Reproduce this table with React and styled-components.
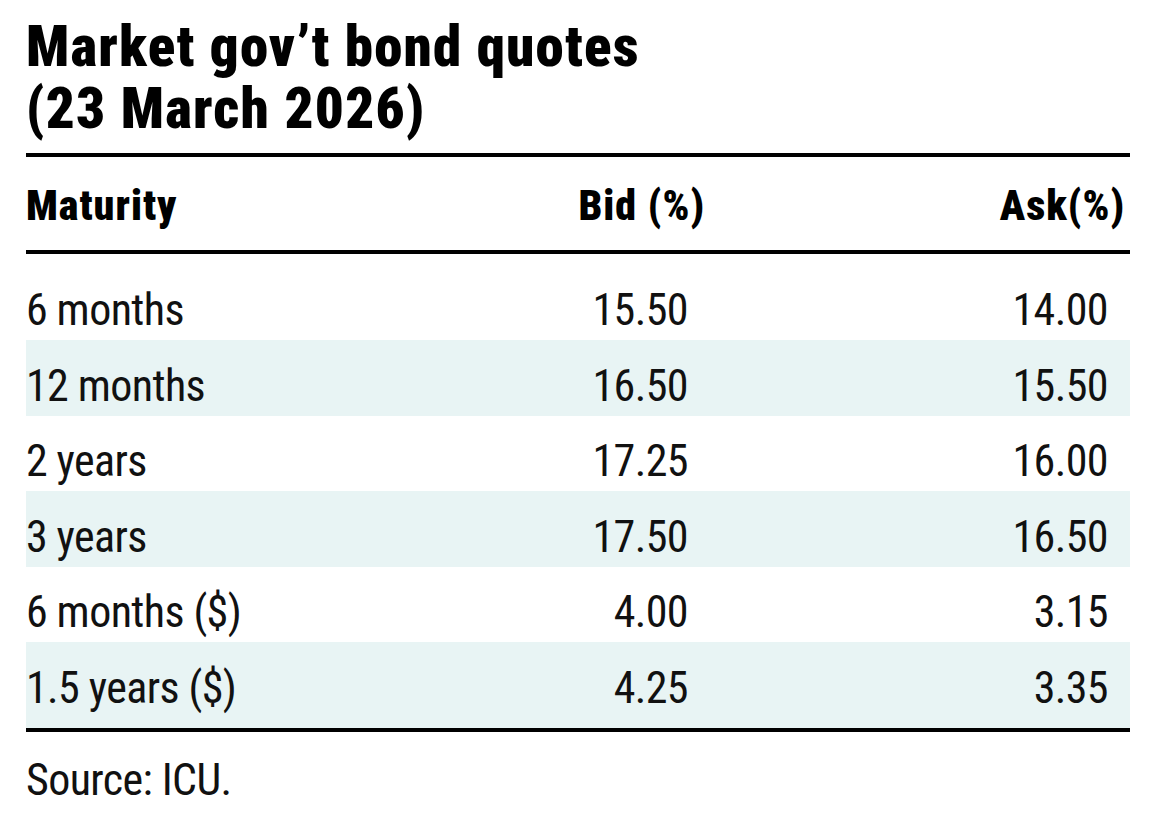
import React from 'react';
import styled, { createGlobalStyle } from 'styled-components';

const GlobalStyle = createGlobalStyle`
  body {
    margin: 0;
    background: #ffffff;
    font-family: 'Roboto Condensed', 'Roboto', sans-serif;
    font-stretch: condensed;
    color: #111111;
  }
`;

const quotes = [
  { maturity: '6 months', bid: '15.50', ask: '14.00' },
  { maturity: '12 months', bid: '16.50', ask: '15.50' },
  { maturity: '2 years', bid: '17.25', ask: '16.00' },
  { maturity: '3 years', bid: '17.50', ask: '16.50' },
  { maturity: '6 months ($)', bid: '4.00', ask: '3.15' },
  { maturity: '1.5 years ($)', bid: '4.25', ask: '3.35' },
];

const App = () => (
  <>
    <GlobalStyle />
    <Page>
      <Title>
        <TitleLine>Market gov’t bond quotes</TitleLine>
        <TitleLine>(23 March 2026)</TitleLine>
      </Title>

      <Table>
        <HeadRow>
          <HeadCell>Maturity</HeadCell>
          <HeadCell $align="right">Bid (%)</HeadCell>
          <HeadCell $align="right">Ask(%)</HeadCell>
        </HeadRow>

        {quotes.map((q, i) => (
          <Row key={q.maturity} $striped={i % 2 === 1}>
            <Cell>{q.maturity}</Cell>
            <Cell $align="right">{q.bid}</Cell>
            <Cell $align="right">{q.ask}</Cell>
          </Row>
        ))}
      </Table>

      <Source>Source: ICU.</Source>
    </Page>
  </>
);

export default App;

// styles

const Page = styled.div`
  width: 1104px;
  padding: 16px 0 0 26px;
`;

const Title = styled.h1`
  margin: 0;
  font-size: 57px;
  font-weight: 900;
  line-height: 62px;
  letter-spacing: 1.2px;
  color: #000000;
`;

const TitleLine = styled.span`
  display: block;
`;

const Table = styled.div`
  margin-top: 13px;
  border-top: 4px solid #000000;
  border-bottom: 4px solid #000000;
`;

const columns = `
  display: grid;
  grid-template-columns: 1fr 300px 420px;
`;

const HeadRow = styled.div`
  ${columns}
  align-items: center;
  padding: 24px 0 20px;
  border-bottom: 4px solid #000000;
`;

const HeadCell = styled.div`
  font-size: 42px;
  font-weight: 900;
  line-height: 49px;
  letter-spacing: 1px;
  color: #000000;
  text-align: ${(p) => p.$align || 'left'};
  padding-right: ${(p) => (p.$align === 'right' ? '5px' : '0')};
`;

const Row = styled.div`
  ${columns}
  box-sizing: border-box;
  height: 75.5px;
  padding-bottom: 5px;
  align-items: end;
  background: ${(p) => (p.$striped ? '#e8f4f4' : 'transparent')};

  &:nth-child(2) {
    height: 86px;
  }

  &:last-child {
    height: 86px;
    padding-bottom: 15.5px;
  }
`;

const Cell = styled.div`
  font-size: 44px;
  font-weight: 400;
  line-height: 49px;
  letter-spacing: -0.6px;
  text-align: ${(p) => p.$align || 'left'};
  padding-right: ${(p) => (p.$align === 'right' ? '22px' : '0')};
`;

const Source = styled.p`
  margin: 23.5px 0 0;
  font-size: 44px;
  line-height: 49px;
  letter-spacing: -0.6px;
`;
